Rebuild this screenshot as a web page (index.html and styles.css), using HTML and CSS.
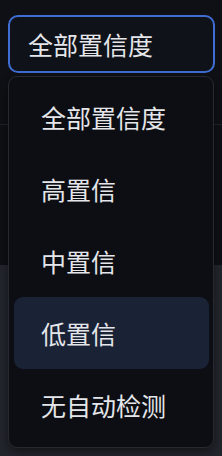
FILE: index.html
```html
<!DOCTYPE html>
<html lang="zh-CN">
<head>
    <meta charset="UTF-8">
    <meta name="viewport" content="width=device-width, initial-scale=1.0">
    <title>置信度筛选</title>
    <link rel="stylesheet" href="styles.css">
</head>
<body>
    <!-- Page behind the open picker -->
    <div class="backdrop">
        <div class="toolbar"></div>
        <div class="table-head"></div>
        <div class="table-body"></div>
    </div>

    <div class="picker">
        <button class="picker-trigger" type="button">全部置信度</button>
        <ul class="picker-menu">
            <li class="picker-option">全部置信度</li>
            <li class="picker-option">高置信</li>
            <li class="picker-option">中置信</li>
            <li class="picker-option active">低置信</li>
            <li class="picker-option">无自动检测</li>
        </ul>
    </div>
</body>
</html>
```

FILE: styles.css
```css
/* Base */
body {
    margin: 0;
    width: 222px;
    height: 456px;
    background: #0e1015;
    font-family: "Noto Sans CJK SC", "Noto Sans", sans-serif;
    color: #e4e6ea;
    overflow: hidden;
}

/* Backdrop page */
.backdrop {
    display: flex;
    flex-direction: column;
    height: 100%;
}

.toolbar {
    height: 124px;
    border-bottom: 1px solid #1f232a;
}

.table-head {
    height: 140px;
}

.table-body {
    flex: 1;
    background: #22252c;
}

/* Picker */
.picker {
    position: absolute;
    top: 15px;
    left: 8px;
    width: 207px;
}

.picker-trigger {
    display: block;
    width: 100%;
    height: 58px;
    padding: 0 0 0 18px;
    border: 2px solid #3f6dd3;
    border-radius: 10px;
    background: #0f1218;
    color: #e4e6ea;
    font-family: inherit;
    font-size: 25px;
    text-align: left;
}

.picker-menu {
    position: absolute;
    top: 61px;
    left: 0;
    width: 206px;
    margin: 0;
    padding: 4px 4px 6px 5px;
    list-style: none;
    box-sizing: border-box;
    background: #0c0e13;
    border: 1px solid #252930;
    border-radius: 9px;
    box-shadow: 0 4px 10px rgba(0, 0, 0, 0.45);
}

.picker-option {
    height: 72px;
    display: flex;
    align-items: center;
    padding-left: 27px;
    border-radius: 9px;
    font-size: 25px;
}

.picker-option.active {
    background: #1a2236;
}
```
